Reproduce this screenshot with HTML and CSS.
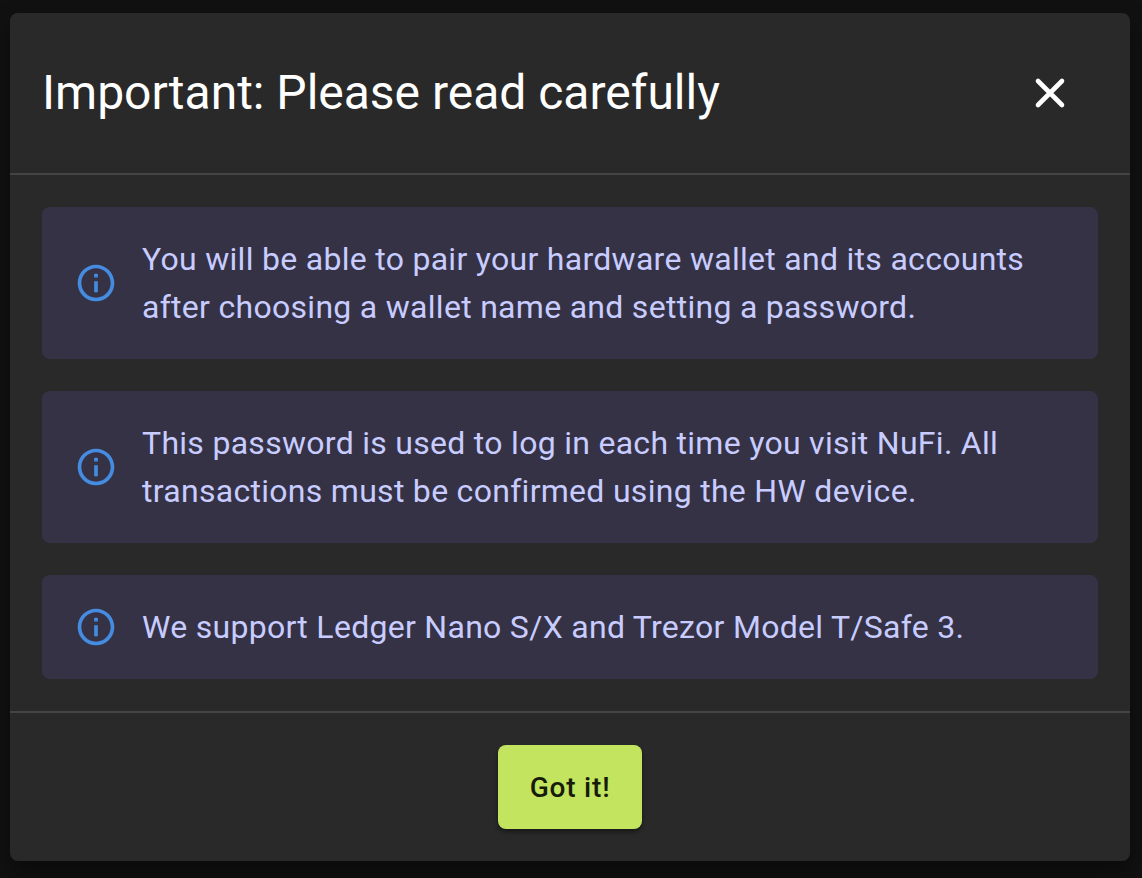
FILE: index.html
```html
<!DOCTYPE html>
<html lang="en">
<head>
<meta charset="utf-8">
<title>Important: Please read carefully</title>
<link rel="stylesheet" href="styles.css">
</head>
<body>
<main class="dialog" role="dialog" aria-labelledby="title">
  <header class="header">
    <h1 class="title" id="title">Important: Please read carefully</h1>
    <button class="close" aria-label="Close"><svg viewBox="0 0 48 48"><path d="M12 12 36 36M36 12 12 36"/></svg></button>
  </header>
  <section class="content">
    <div class="alert">
      <svg class="info" viewBox="0 0 24 24"><path d="M11 7h2v2h-2zm0 4h2v6h-2zm1-9C6.48 2 2 6.48 2 12s4.48 10 10 10 10-4.480 10-10S17.520 2 12 2zm0 18c-4.410 0-8-3.590-8-8s3.590-8 8-8 8 3.590 8 8-3.590 8-8 8z"/></svg>
      <p class="text">You will be able to pair your hardware wallet and its accounts<br>after choosing a wallet name and setting a password.</p>
    </div>
    <div class="alert">
      <svg class="info" viewBox="0 0 24 24"><path d="M11 7h2v2h-2zm0 4h2v6h-2zm1-9C6.48 2 2 6.48 2 12s4.48 10 10 10 10-4.480 10-10S17.520 2 12 2zm0 18c-4.410 0-8-3.590-8-8s3.590-8 8-8 8 3.590 8 8-3.590 8-8 8z"/></svg>
      <p class="text">This password is used to log in each time you visit NuFi. All<br>transactions must be confirmed using the HW device.</p>
    </div>
    <div class="alert">
      <svg class="info" viewBox="0 0 24 24"><path d="M11 7h2v2h-2zm0 4h2v6h-2zm1-9C6.48 2 2 6.48 2 12s4.48 10 10 10 10-4.480 10-10S17.520 2 12 2zm0 18c-4.410 0-8-3.590-8-8s3.590-8 8-8 8 3.590 8 8-3.590 8-8 8z"/></svg>
      <p class="text">We support Ledger Nano S/X and Trezor Model T/Safe 3.</p>
    </div>
  </section>
  <footer class="footer"><button class="confirm">Got it!</button></footer>
</main>
</body>
</html>
```
FILE: styles.css
```css
* { box-sizing: border-box; }
body {
  margin: 0;
  height: 878px;
  padding: 13px 12px 17px 10px;
  overflow: hidden;
  background: #111;
  font-family: Roboto, sans-serif;
}
.dialog {
  height: 848px;
  display: flex;
  flex-direction: column;
  border-radius: 8px;
  background: #292929;
  box-shadow: 0 12px 24px #0006;
  overflow: hidden;
}
.header {
  height: 160px;
  display: flex;
  align-items: center;
  justify-content: space-between;
  padding: 0 56px 0 32px;
}
.title {
  margin: 0;
  color: #fff;
  font-size: 48px;
  font-weight: 400;
  line-height: 64px;
  letter-spacing: -0.01px;
  white-space: nowrap;
}
.close {
  display: flex;
  padding: 0;
  border: 0;
  background: none;
}
.close svg {
  width: 48px;
  height: 48px;
  fill: none;
  stroke: #fff;
  stroke-width: 4.6;
  stroke-linecap: round;
}
.content {
  height: 540px;
  display: flex;
  flex-direction: column;
  gap: 32px;
  padding: 32px;
  border-top: 2px solid #444;
  border-bottom: 2px solid #444;
}
.alert {
  display: flex;
  align-items: center;
  gap: 24px;
  padding: 28px 32px;
  border-radius: 8px;
  background: #353246;
}
.info { flex: none; width: 44px; height: 44px; fill: #458be0; }
.text {
  margin: 0;
  color: #c8ccff;
  font-size: 32px;
  line-height: 48px;
  letter-spacing: 0.288px;
  white-space: nowrap;
}
.footer {
  display: flex;
  justify-content: center;
  padding-top: 32px;
}
.confirm {
  width: 144px;
  height: 84px;
  padding: 2px 0 0;
  border: 0;
  border-radius: 8px;
  background: #c2e45f;
  box-shadow: 0 3px 4px #0006;
  color: #171c0a;
  font: 500 28px/48px Roboto, sans-serif;
  letter-spacing: 0.8px;
}
```
